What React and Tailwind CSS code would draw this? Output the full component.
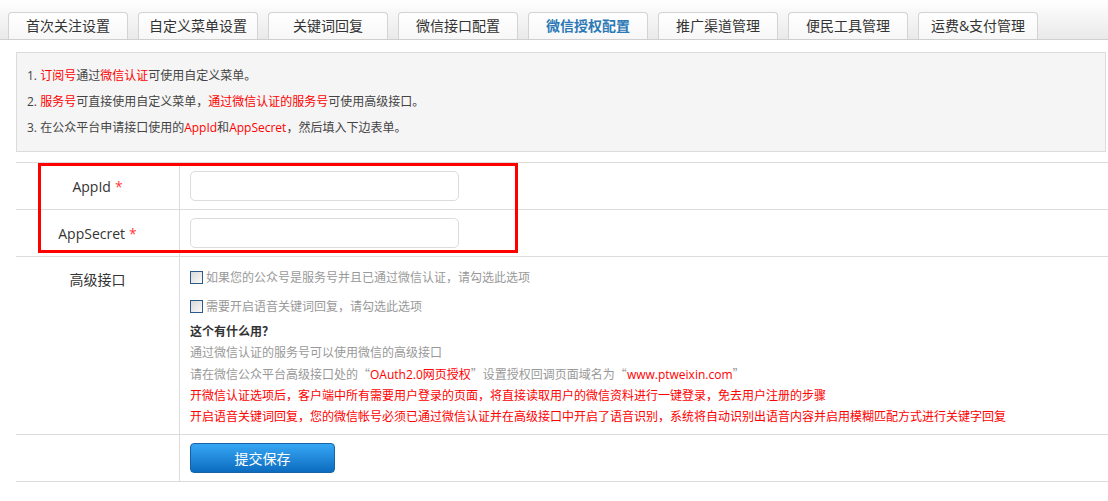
import React from "react"

const tabs = [
  "首次关注设置",
  "自定义菜单设置",
  "关键词回复",
  "微信接口配置",
  "微信授权配置",
  "推广渠道管理",
  "便民工具管理",
  "运费&支付管理",
]

const activeTab = "微信授权配置"

function Checkbox() {
  return (
    <span className="inline-block h-[13px] w-[13px] shrink-0 border border-[#2b5b8b] bg-linear-to-br from-[#d8d8d8] to-[#fbfbfb]" />
  )
}

// full width chinese quote marks
function Q({ children }) {
  return (
    <span className="font-['Noto_Sans_CJK_SC'] [font-feature-settings:'fwid']">{children}</span>
  )
}

export default function App() {
  return (
    <div
      className="relative h-[501px] w-[1108px] overflow-hidden bg-white text-[#333]"
      style={{ fontFamily: '"Open Sans", "Noto Sans CJK SC", sans-serif' }}
    >
      {/* tab bar */}
      <div className="flex h-[40px] items-end border-b border-[#cfcfcf] bg-linear-to-b from-[#ffffff] to-[#e9e9e9] pl-[8px]">
        {tabs.map((tab) => (
          <div
            key={tab}
            className={
              tab === activeTab
                ? "mr-[10px] flex h-[27px] w-[120px] items-center justify-center rounded-t-[4px] border border-b-0 border-[#d3d3d3] bg-linear-to-b from-white to-[#f7f7f7] text-[14px] font-semibold leading-none text-[#2c79b6]"
                : "mr-[10px] flex h-[27px] w-[120px] items-center justify-center rounded-t-[4px] border border-b-0 border-[#d3d3d3] bg-linear-to-b from-white to-[#f7f7f7] text-[14px] leading-none text-[#333]"
            }
          >
            {tab}
          </div>
        ))}
      </div>

      {/* notice */}
      <div className="ml-[16px] mr-[2px] mt-[12px] border border-[#dcdcdc] bg-[#f5f5f5] px-[10px] py-[10px] text-[12px] leading-[26px] text-[#444]">
        <p>
          1. <span className="text-[#ff0000]">订阅号</span>通过<span className="text-[#ff0000]">微信认证</span>可使用自定义菜单。
        </p>
        <p>
          2. <span className="text-[#ff0000]">服务号</span>可直接使用自定义菜单，
          <span className="text-[#ff0000]">通过微信认证的服务号</span>可使用高级接口。
        </p>
        <p>
          3. 在公众平台申请接口使用的<span className="text-[#ff0000]">AppId</span>和
          <span className="text-[#ff0000]">AppSecret</span>，然后填入下边表单。
        </p>
      </div>

      {/* form table */}
      <div className="ml-[16px] mt-[10px] border-t border-[#dcdcdc]">
        <div className="flex border-b border-[#dcdcdc]">
          <div className="flex w-[164px] shrink-0 items-center justify-center border-r border-[#dcdcdc] text-[14px]">
            AppId <span className="ml-[4px] text-[#ff3b3b]">*</span>
          </div>
          <div className="py-[8px] pl-[10px]">
            <input className="block h-[30px] w-[269px] rounded-[5px] border border-[#dcdcdc] bg-white outline-none" />
          </div>
        </div>
        <div className="flex border-b border-[#dcdcdc]">
          <div className="flex w-[164px] shrink-0 items-center justify-center border-r border-[#dcdcdc] text-[14px]">
            AppSecret <span className="ml-[4px] text-[#ff3b3b]">*</span>
          </div>
          <div className="py-[8px] pl-[10px]">
            <input className="block h-[30px] w-[269px] rounded-[5px] border border-[#dcdcdc] bg-white outline-none" />
          </div>
        </div>
        <div className="flex border-b border-[#dcdcdc]">
          <div className="w-[164px] shrink-0 border-r border-[#dcdcdc] pt-[13px] text-center text-[14px] leading-[20px]">
            高级接口
          </div>
          <div className="pb-[7px] pl-[10px] pt-[6px] text-[12px] leading-[21px] text-[#999]">
            <div className="flex h-[29px] items-center gap-[3px]">
              <Checkbox />
              <span>如果您的公众号是服务号并且已通过微信认证，请勾选此选项</span>
            </div>
            <div className="flex h-[29px] items-center gap-[3px]">
              <Checkbox />
              <span>需要开启语音关键词回复，请勾选此选项</span>
            </div>
            <p className="font-bold text-[#333]">这个有什么用？</p>
            <p>通过微信认证的服务号可以使用微信的高级接口</p>
            <p>
              请在微信公众平台高级接口处的<Q>“</Q>
              <span className="text-[#ff0000]">OAuth2.0网页授权</span>
              <Q>”</Q>设置授权回调页面域名为<Q>“</Q>
              <span className="text-[#ff0000]">www.ptweixin.com</span>
              <Q>”</Q>
            </p>
            <p className="text-[#ff0000]">
              开微信认证选项后，客户端中所有需要用户登录的页面，将直接读取用户的微信资料进行一键登录，免去用户注册的步骤
            </p>
            <p className="text-[#ff0000]">
              开启语音关键词回复，您的微信帐号必须已通过微信认证并在高级接口中开启了语音识别，系统将自动识别出语音内容并启用模糊匹配方式进行关键字回复
            </p>
          </div>
        </div>
        <div className="flex border-b border-[#dcdcdc]">
          <div className="w-[164px] shrink-0 border-r border-[#dcdcdc]" />
          <div className="pb-[8px] pl-[10px] pt-[8px]">
            <button className="h-[30px] w-[145px] rounded-[4px] border border-[#1663a6] bg-linear-to-b from-[#36a7f5] to-[#0b6cbf] text-[14px] text-white">
              提交保存
            </button>
          </div>
        </div>
      </div>

      {/* red highlight around the credential rows */}
      <div className="pointer-events-none absolute left-[38px] top-[163px] h-[90px] w-[480px] border-[3px] border-[#ff0000]" />
    </div>
  )
}
